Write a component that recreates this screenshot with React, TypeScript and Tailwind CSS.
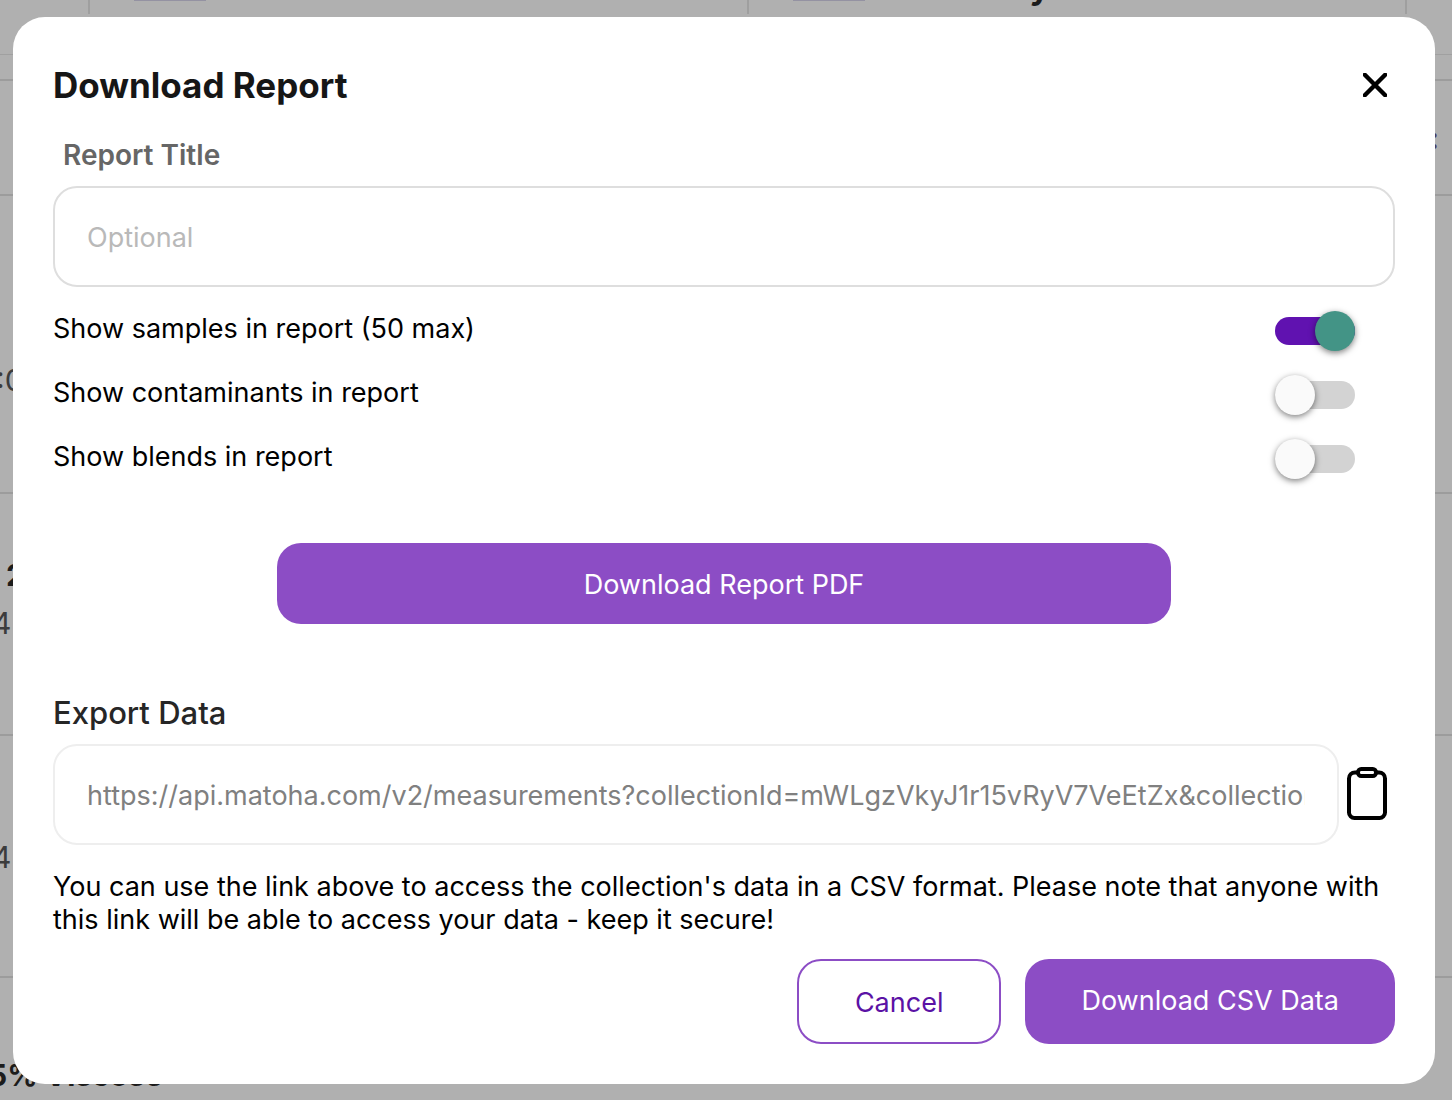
import { useState } from 'react';

const EXPORT_URL =
  'https://api.matoha.com/v2/measurements?collectionId=mWLgzVkyJ1r15vRyV7VeEtZx&collectionType=batch';

interface ToggleRowProps {
  id: string;
  label: string;
  checked: boolean;
  onChange: (value: boolean) => void;
}

function ToggleRow({ id, label, checked, onChange }: ToggleRowProps) {
  return (
    <div className="flex h-16 items-center justify-between pr-10">
      <label htmlFor={id} className="pb-1 text-[27px] leading-8 text-black">
        {label}
      </label>
      <input
        id={id}
        type="checkbox"
        checked={checked}
        onChange={(e) => onChange(e.target.checked)}
        className="flex h-7 w-20 shrink-0 cursor-pointer appearance-none items-center rounded-full bg-[#d3d3d3] before:size-10 before:shrink-0 before:rounded-full before:bg-[#fafafa] before:shadow-[0_2px_6px_rgba(0,0,0,0.5)] before:transition-transform before:content-[''] checked:bg-[#6012b0] checked:before:translate-x-10 checked:before:bg-[#439486]"
      />
    </div>
  );
}

// dimmed page behind the dialog
function PageBehind() {
  return (
    <div
      aria-hidden="true"
      className="flex h-screen flex-col overflow-hidden bg-[#b0b0b0] text-[30px] leading-8 text-[#3c3c3c]"
    >
      <div className="h-[54px] shrink-0 pr-[45px] pl-[88px]">
        <div className="flex h-[14px] border-x-2 border-[#9f9f9f]">
          <div className="flex-1 pl-11">
            <div className="h-px w-[72px] bg-[#9492a2]" />
          </div>
          <div className="flex flex-1 items-end border-l-2 border-[#9f9f9f] pl-11">
            <div className="h-[14px] w-[72px]">
              <div className="h-px bg-[#9492a2]" />
            </div>
            <span className="pb-[11px] pl-[165px] text-[34px] font-bold text-[#1c1c1c]">y</span>
          </div>
        </div>
      </div>
      <div className="h-[25px] shrink-0 border-t border-[#a0a0a0]" />
      <div className="flex h-[115px] shrink-0 items-center justify-end border-t-2 border-[#9c9c9c] pr-[13px] font-bold text-[#4a3a5c]">
        :
      </div>
      <div className="h-[298px] shrink-0 border-t-2 border-[#9c9c9c] pt-[168px]">
        <span className="-ml-1 block">:0</span>
      </div>
      <div className="h-[242px] shrink-0 border-t-2 border-[#9c9c9c] pt-[65px]">
        <span className="block pl-[6px] font-bold text-[#1c1c1c]">2</span>
        <span className="-ml-2 block pt-4">4</span>
      </div>
      <div className="h-[242px] shrink-0 border-t-2 border-[#9c9c9c] pt-[105px]">
        <span className="-ml-2 block">4</span>
      </div>
      <div className="h-[124px] shrink-0 border-t-2 border-[#9c9c9c] pt-[81px]">
        <span className="-ml-3 block font-bold text-[#1c1c1c]">5% Viscose</span>
      </div>
    </div>
  );
}

export default function App() {
  const [title, setTitle] = useState('');
  const [samples, setSamples] = useState(true);
  const [contaminants, setContaminants] = useState(false);
  const [blends, setBlends] = useState(false);

  function handleCopy() {
    navigator.clipboard?.writeText(EXPORT_URL);
  }

  return (
    <div className="font-[Inter,'Liberation_Sans',sans-serif]">
      <PageBehind />

      <div className="fixed inset-0 overflow-y-auto pt-[17px] pr-[17px] pb-4 pl-[13px]">
        <div
          role="dialog"
          aria-modal="true"
          aria-labelledby="dialog-title"
          className="rounded-4xl bg-white p-10"
        >
          <div className="flex h-14 items-center justify-between">
            <h2 id="dialog-title" className="text-[35px] leading-10 font-bold text-[#161616]">
              Download Report
            </h2>
            <button
              type="button"
              aria-label="Close"
              className="flex size-10 cursor-pointer items-center justify-center text-black"
            >
              <svg viewBox="0 0 24 24" className="size-6" fill="none" stroke="currentColor" strokeWidth="4.400">
                <path d="M1.800 1.800 22.200 22.200M22.200 1.800 1.800 22.200" strokeLinecap="square" />
              </svg>
            </button>
          </div>

          <label
            htmlFor="report-title"
            className="mt-6 block pl-[10px] text-[28px] leading-9 font-semibold text-[#666666]"
          >
            Report Title
          </label>
          <input
            id="report-title"
            type="text"
            placeholder="Optional"
            value={title}
            onChange={(e) => setTitle(e.target.value)}
            className="mt-[13px] block h-[101px] w-full rounded-3xl border-2 border-[#dedede] px-8 pt-[2px] text-[27px] text-black outline-none placeholder:text-[#b9b9b9]"
          />

          <div className="mt-3">
            <ToggleRow
              id="show-samples"
              label="Show samples in report (50 max)"
              checked={samples}
              onChange={setSamples}
            />
            <ToggleRow
              id="show-contaminants"
              label="Show contaminants in report"
              checked={contaminants}
              onChange={setContaminants}
            />
            <ToggleRow
              id="show-blends"
              label="Show blends in report"
              checked={blends}
              onChange={setBlends}
            />
          </div>

          <button
            type="button"
            className="mx-auto mt-[52px] block h-[81px] w-2/3 cursor-pointer rounded-3xl bg-[#8c4dc5] pt-1 text-[27px] text-white"
          >
            Download Report PDF
          </button>

          <label
            htmlFor="export-url"
            className="mt-[69px] block text-[31px] leading-10 font-medium text-[#262626]"
          >
            Export Data
          </label>
          <div className="mt-[11px] flex items-center gap-2">
            <input
              id="export-url"
              type="text"
              readOnly
              value={EXPORT_URL}
              className="h-[101px] min-w-0 flex-1 rounded-3xl border-2 border-[#eeeeee] px-8 pt-[2px] text-[27px] text-[#808080] outline-none"
            />
            <button
              type="button"
              aria-label="Copy link"
              onClick={handleCopy}
              className="mr-2 shrink-0 cursor-pointer pb-[2px] text-black"
            >
              <svg viewBox="0 0 40 54" className="h-[54px] w-10" fill="none" stroke="currentColor">
                <path
                  d="M10 5.500H8a6 6 0 0 0-6 6V45.500a5.500 5.500 0 0 0 5.500 5.500h25A5.500 5.500 0 0 0 38 45.500V11.500a6 6 0 0 0-6-6h-2"
                  strokeWidth="4"
                />
                <rect x="11" y="2" width="18" height="7" rx="3.200" strokeWidth="4" />
              </svg>
            </button>
          </div>

          <p className="mt-[25px] text-[27px] leading-[33px] text-black">
            You can use the link above to access the collection's data in a CSV format. Please note
            that anyone with this link will be able to access your data - keep it secure!
          </p>

          <div className="mt-[23px] flex justify-end gap-6">
            <button
              type="button"
              className="h-[85px] cursor-pointer rounded-3xl border-2 border-[#8c4dc5] px-14 pt-1 text-[27px] text-[#5b12a5]"
            >
              Cancel
            </button>
            <button
              type="button"
              className="h-[85px] cursor-pointer rounded-3xl bg-[#8c4dc5] px-14 text-[27px] text-white"
            >
              Download CSV Data
            </button>
          </div>
        </div>
      </div>
    </div>
  );
}
